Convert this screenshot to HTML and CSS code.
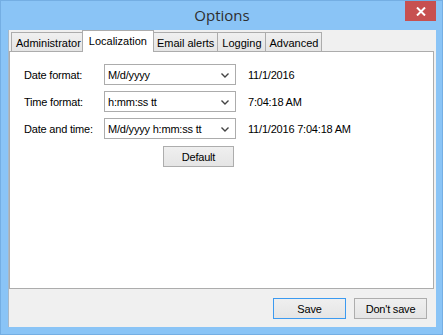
FILE: index.html
```html
<!DOCTYPE html>
<html lang="en">

<head>
    <meta charset="utf-8">
    <title>Options</title>
    <link rel="stylesheet" href="styles.css">
</head>

<body>
    <div class="window">
        <div class="titlebar">
            <span class="title">Options</span>
            <button class="close" aria-label="Close">
                <svg width="10" height="9" viewBox="0 0 10 9">
                    <path d="M1 0.5 L9 8.5 M9 0.5 L1 8.5" stroke="#fff" stroke-width="2" />
                </svg>
            </button>
        </div>

        <div class="client">
            <div class="tabs">
                <button class="tab">Administrator</button>
                <button class="tab active">Localization</button>
                <button class="tab">Email alerts</button>
                <button class="tab">Logging</button>
                <button class="tab">Advanced</button>
            </div>

            <div class="panel">
                <div class="form">
                    <span class="label">Date format:</span>
                    <div class="combo"><span>M/d/yyyy</span><svg class="chev" width="8" height="5" viewBox="0 0 8 5"><path d="M0.5 0.5 L4 4 L7.5 0.5" stroke="#444" stroke-width="1.4" fill="none" /></svg></div>
                    <span class="value">11/1/2016</span>

                    <span class="label">Time format:</span>
                    <div class="combo"><span>h:mm:ss tt</span><svg class="chev" width="8" height="5" viewBox="0 0 8 5"><path d="M0.5 0.5 L4 4 L7.5 0.5" stroke="#444" stroke-width="1.4" fill="none" /></svg></div>
                    <span class="value">7:04:18 AM</span>

                    <span class="label">Date and time:</span>
                    <div class="combo"><span>M/d/yyyy h:mm:ss tt</span><svg class="chev" width="8" height="5" viewBox="0 0 8 5"><path d="M0.5 0.5 L4 4 L7.5 0.5" stroke="#444" stroke-width="1.4" fill="none" /></svg></div>
                    <span class="value">11/1/2016 7:04:18 AM</span>

                    <button class="button default">Default</button>
                </div>
            </div>

            <div class="footer">
                <button class="button focused">Save</button>
                <button class="button">Don't save</button>
            </div>
        </div>
    </div>
</body>

</html>
```

FILE: styles.css
```css
body {
    margin: 0;
    padding: 0;
    font-family: "Liberation Sans", Arial, sans-serif;
    font-size: 11px;
    letter-spacing: -0.2px;
    color: #000;
}

.window {
    width: 443px;
    height: 335px;
    box-sizing: border-box;
    background-color: #8ac4f6;
    border: 1px solid #74aee3;
    display: flex;
    flex-direction: column;
    padding: 0 6px 7px 7px;
}

.titlebar {
    height: 29px;
    position: relative;
    display: flex;
    justify-content: center;
    align-items: center;
}

.title {
    font-family: "Open Sans", "Noto Sans", sans-serif;
    font-size: 15px;
    letter-spacing: 0;
    color: #2e2e2e;
    margin-top: -1px;
}

.close {
    position: absolute;
    top: 0;
    right: 0;
    width: 31px;
    height: 20px;
    border: none;
    padding: 0;
    background-color: #c75050;
    display: flex;
    align-items: center;
    justify-content: center;
}

.client {
    flex: 1;
    background-color: #f0f0f0;
    border-left: 1px solid #a7b8c8;
    display: flex;
    flex-direction: column;
}

.tabs {
    display: flex;
    align-items: flex-end;
    height: 21px;
    padding-left: 2px;
    position: relative;
    z-index: 1;
}

.tab {
    font-family: inherit;
    font-size: 11px;
    letter-spacing: 0;
    height: 19px;
    padding: 1px 3px 0 4px;
    border: 1px solid #acacac;
    border-bottom: none;
    margin-right: -1px;
    background: linear-gradient(#f0f0f0, #e5e5e5);
    color: #000;
}

.tab.active {
    height: 22px;
    margin: 0 -2px -1px -2px;
    padding: 0 6px 2px;
    background: #fff;
    position: relative;
}

.panel {
    height: 238px;
    box-sizing: border-box;
    background-color: #fff;
    border: 1px solid #acacac;
    margin-right: 2px;
    padding: 12px 14px;
}

.form {
    display: grid;
    grid-template-columns: 68px 132px auto;
    column-gap: 12px;
    row-gap: 6px;
    align-items: center;
}

.form .label {
    white-space: nowrap;
}

.combo {
    height: 21px;
    box-sizing: border-box;
    border: 1px solid #acacac;
    display: flex;
    align-items: center;
    justify-content: space-between;
    padding: 0 6px 0 3px;
    white-space: nowrap;
    overflow: hidden;
}

.chev {
    flex-shrink: 0;
    margin-top: 1px;
}

.value {
    white-space: nowrap;
}

.button {
    font-family: inherit;
    font-size: 11px;
    letter-spacing: -0.2px;
    height: 21px;
    width: 73px;
    padding: 0;
    border: 1px solid #adadad;
    background: linear-gradient(#efefef, #e5e5e5);
    color: #000;
}

.button.default {
    grid-column: 2;
    justify-self: end;
    margin-right: 2px;
    width: 71px;
    margin-top: 1px;
}

.button.focused {
    border-color: #3c9af0;
}

.footer {
    display: flex;
    justify-content: flex-end;
    gap: 8px;
    padding: 9px 9px 0 0;
}
```
